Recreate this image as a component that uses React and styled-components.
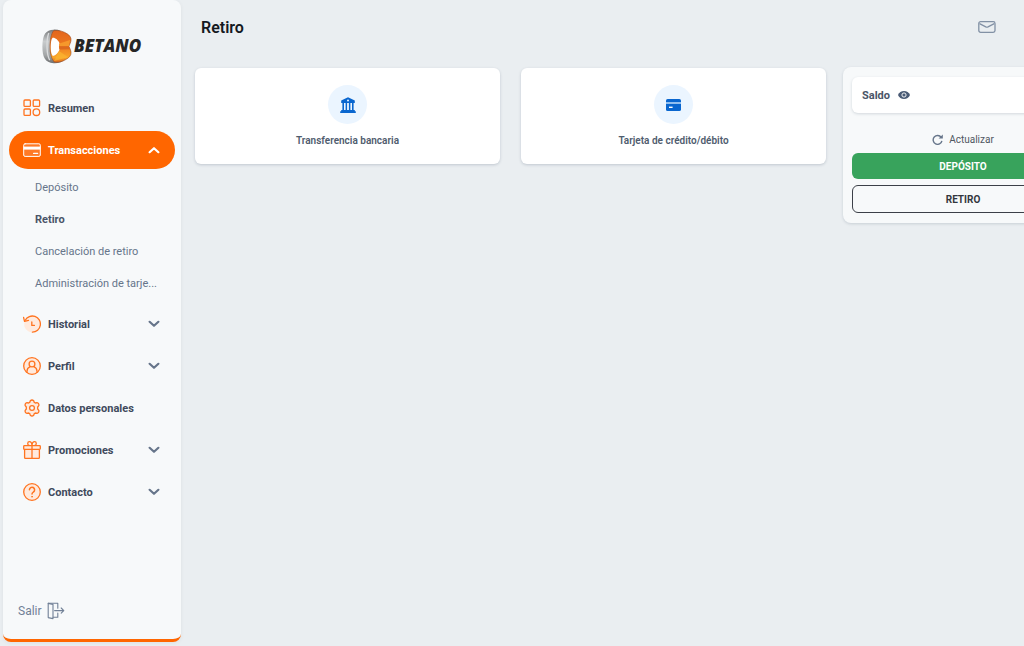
import React, { useState } from 'react';
import styled, { createGlobalStyle } from 'styled-components';

const GlobalStyle = createGlobalStyle`
  * {
    box-sizing: border-box;
  }

  body {
    margin: 0;
    background: #eaeef1;
    font-family: Roboto, "Liberation Sans", sans-serif;
    font-size: 11px;
    color: #4a5568;
  }

  button {
    font-family: inherit;
    cursor: pointer;
  }

  ul {
    list-style: none;
    margin: 0;
    padding: 0;
  }

  svg {
    display: block;
    flex-shrink: 0;
  }
`;

const Layout = styled.div`
  display: flex;
  min-height: 100vh;
  overflow: hidden;
`;

const Sidebar = styled.aside`
  display: flex;
  flex-direction: column;
  flex: 0 0 178px;
  min-width: 0;
  margin: 0 0 4px 3px;
  padding: 0 6px;
  background: #f7f9fa;
  border-bottom: 3px solid #ff6600;
  border-radius: 8px;
  box-shadow: 0 1px 4px rgba(0, 0, 0, 0.06);
`;

const Logo = styled.a`
  display: flex;
  align-items: center;
  gap: 2px;
  height: 89px;
  padding: 4px 0 0 33px;
  color: #262626;
  font-family: "Open Sans", sans-serif;
  font-size: 17px;
  font-style: italic;
  font-weight: 800;
  line-height: 20px;
  text-decoration: none;

  span {
    padding-bottom: 2px;
  }
`;

const Nav = styled.nav`
  flex: 1;

  > ul {
    display: flex;
    flex-direction: column;
    gap: 4px;
  }
`;

const NavButton = styled.button`
  display: flex;
  align-items: center;
  gap: 7px;
  width: 100%;
  height: 38px;
  padding: 0 15px 0 14px;
  border: 0;
  border-radius: 19px;
  background: ${props => (props.$active ? '#ff6600' : 'transparent')};
  color: ${props => (props.$active ? '#fff' : '#3f4a5c')};
  font-size: 11px;
  font-weight: 700;
  text-align: left;

  span {
    flex: 1;
    white-space: nowrap;
  }
`;

const SubList = styled.ul`
  padding: 3px 15px 1px 26px;
`;

const SubLink = styled.a`
  display: block;
  color: ${props => (props.$active ? '#4a5568' : '#66758a')};
  font-weight: ${props => (props.$active ? 700 : 400)};
  line-height: 32px;
  text-decoration: none;
  white-space: nowrap;
`;

const LogoutButton = styled.button`
  display: flex;
  align-items: center;
  align-self: flex-start;
  gap: 5px;
  height: 38px;
  margin-bottom: 9px;
  padding: 0 9px;
  border: 0;
  background: transparent;
  color: #718096;
  font-size: 12px;
`;

const Main = styled.main`
  flex: 1;
  min-width: 0;
  padding-left: 14px;
`;

const Header = styled.header`
  display: flex;
  align-items: center;
  justify-content: space-between;
  height: 67px;
  padding: 0 28px 13px 6px;
`;

const Title = styled.h1`
  margin: 0;
  color: #15191f;
  font-size: 16px;
  font-weight: 600;
`;

const IconButton = styled.button`
  padding: 0;
  border: 0;
  background: transparent;
  color: inherit;
`;

/* the balance panel keeps its width and runs off narrow windows */
const Content = styled.div`
  display: grid;
  grid-template-columns: 1fr 240px;
  align-items: start;
  gap: 17px;
  min-width: 888px;
`;

const Methods = styled.div`
  display: grid;
  grid-template-columns: 1fr 1fr;
  gap: 21px;
  padding-top: 1px;
`;

const MethodCard = styled.button`
  display: flex;
  flex-direction: column;
  align-items: center;
  gap: 10px;
  padding: 17px 17px 16px;
  border: 0;
  border-radius: 6px;
  background: #fff;
  box-shadow: 0 1px 3px rgba(45, 65, 90, 0.22);
  color: #4f5c6e;
  font-size: 10px;
  font-weight: 600;
  line-height: 14px;
`;

const MethodIcon = styled.div`
  display: flex;
  align-items: center;
  justify-content: center;
  width: 39px;
  height: 39px;
  border-radius: 50%;
  background: #ebf5ff;
`;

const Panel = styled.section`
  display: flex;
  flex-direction: column;
  padding: 10px 9px;
  border-radius: 8px;
  background: #f7f9fa;
  box-shadow: 0 1px 3px rgba(45, 65, 90, 0.18);
`;

const Balance = styled.div`
  display: flex;
  align-items: center;
  gap: 8px;
  height: 36px;
  padding: 0 10px;
  border-radius: 6px;
  background: #fff;
  box-shadow: 0 1px 3px rgba(45, 65, 90, 0.18);
  font-weight: 700;
`;

const RefreshButton = styled.button`
  display: flex;
  align-items: center;
  align-self: center;
  gap: 6px;
  height: 20px;
  margin: 16px 0 4px;
  padding: 0;
  border: 0;
  background: transparent;
  color: #4f5761;
  font-size: 10px;
`;

const ActionButton = styled.button`
  height: ${props => (props.$primary ? 26 : 28)}px;
  margin-bottom: ${props => (props.$primary ? 6 : 0)}px;
  padding: 0;
  border: ${props => (props.$primary ? '0' : '1px solid #3c4048')};
  border-radius: 6px;
  background: ${props => (props.$primary ? '#38a35c' : 'transparent')};
  color: ${props => (props.$primary ? '#fff' : '#33373d')};
  font-size: 10px;
  font-weight: 700;
`;

const LineIcon = ({ children, color = '#ff7420', size = 18 }) => (
  <svg width={size} height={size} viewBox="0 0 18 18" fill="none" stroke={color}
    strokeWidth="1.3" strokeLinecap="round" strokeLinejoin="round" aria-hidden="true">
    {children}
  </svg>
);

const icons = {
  resumen: (
    <LineIcon>
      <rect x="1" y="1" width="6.4" height="6.4" rx="1" />
      <rect x="10.2" y="1" width="6.4" height="6.4" rx="1" />
      <rect x="1" y="10" width="6.4" height="6.4" rx="1" />
      <circle cx="13.4" cy="13.2" r="3.3" />
    </LineIcon>
  ),
  transacciones: (
    <LineIcon color="#fff">
      <rect x="0.7" y="2.8" width="16.6" height="12.6" rx="1.4" fill="#ff7a26" strokeWidth="1" />
      <path d="M.6 5.6h16.8v3H.6z" fill="#fff" stroke="none" />
      <path d="M10.6 12.4h4" />
    </LineIcon>
  ),
  historial: (
    <LineIcon>
      <path d="M9 .9a8.1 8.1 0 1 1-7.7 10.4V6A8.1 8.1 0 0 1 9 .9z" fill="#ffeadd" stroke="none" />
      <path d="M2.2 5.2A8.1 8.1 0 1 1 9.4 17.2" />
      <path d="M.6 2.4l.9 4 4-1" />
      <path d="M8.8 7v3.4h2.6" />
    </LineIcon>
  ),
  perfil: (
    <LineIcon>
      <circle cx="9" cy="9" r="8.3" fill="#ffeadd" />
      <circle cx="9" cy="7" r="2.9" />
      <path d="M4 15.4v-1.2c0-2.2 1.3-3.8 3.2-4.6M14 15.4v-1.2c0-2.2-1.3-3.8-3.2-4.6" />
    </LineIcon>
  ),
  datos: (
    <LineIcon>
      <path d="M7.3 1.8Q9 .2 10.7 1.8l.6 1.6 1.1.6 1.7-.3q2.3.6 1.7 2.9l-1.1 1.4v2l1.1 1.4q.6 2.3-1.7 2.9l-1.7-.3-1.1.6-.6 1.6Q9 17.8 7.3 16.2l-.6-1.6-1.1-.6-1.7.3q-2.3-.6-1.7-2.9L3.3 10V8L2.2 6.6q-.6-2.3 1.7-2.9l1.7.3 1.1-.6z" fill="#ffeadd" />
      <circle cx="9" cy="9" r="2.4" fill="#f7f9fa" />
    </LineIcon>
  ),
  promociones: (
    <LineIcon>
      <rect x="1.6" y="8.2" width="14.8" height="9.2" rx="0.8" fill="#ffeadd" />
      <rect x="0.7" y="4.6" width="16.6" height="3.8" rx="0.8" fill="#ffeadd" />
      <path d="M9 4.6v12.8" />
      <path d="M9 4.4C8.8 2 7.8.7 6.4.7 4.2.7 4.2 4 6.2 4.4M9 4.4C9.2 2 10.2.7 11.6.7c2.2 0 2.2 3.3.2 3.7" />
    </LineIcon>
  ),
  contacto: (
    <LineIcon>
      <circle cx="9" cy="9" r="8.3" fill="#ffeadd" />
      <path d="M6.4 6.8a2.6 2.6 0 1 1 4 2.2c-1 .7-1.4 1.1-1.4 2.1" strokeWidth="1.5" />
      <circle cx="9" cy="13.7" r="0.5" fill="#ff7420" strokeWidth="0.7" />
    </LineIcon>
  ),
};

const Chevron = ({ up }) => (
  <svg width="12" height="8" viewBox="0 0 12 8" fill="none" stroke={up ? '#fff' : '#66758a'}
    strokeWidth="2.2" strokeLinecap="round" strokeLinejoin="round" aria-hidden="true">
    <path d={up ? 'M1.6 6.2L6 2.2l4.4 4' : 'M1.6 1.8L6 5.8l4.4-4'} />
  </svg>
);

const LogoMark = () => (
  <svg width="30" height="35" viewBox="0 0 31 36" aria-hidden="true">
    <defs>
      <linearGradient id="metal" x1="0" y1="0" x2="0" y2="1">
        <stop offset="0" stopColor="#77797a" />
        <stop offset="0.35" stopColor="#c9cccd" />
        <stop offset="0.75" stopColor="#a5a8a9" />
        <stop offset="1" stopColor="#6e7071" />
      </linearGradient>
      <linearGradient id="flame" x1="0" y1="0" x2="0" y2="1">
        <stop offset="0" stopColor="#e3651c" />
        <stop offset="0.5" stopColor="#ee7a20" />
        <stop offset="0.85" stopColor="#f9a629" />
        <stop offset="1" stopColor="#df6a1b" />
      </linearGradient>
    </defs>
    <path d="M12 .6C4 1 .6 5 .4 18c0 11 2.6 16.5 11.6 17.2 5 .3 9-1.2 12-4L17 4.5 19.5 2C17 .8 14.5.4 12 .6z" fill="url(#metal)" />
    <path d="M7 4C5.5 8 5 13 5.2 19c.2 6 1 10 2.8 13" fill="none" stroke="#d9dbdc" strokeWidth="1.4" />
    <path d="M12 1.6c5-.8 10 .5 14.5 3.6 3.5 2.5 4.3 5.5 2.7 9.3l-1.4 3.3 1.6 3.6c1.3 3.5.6 6-2 8.2C22.8 33 18 35 12.5 34 9.5 30 8.2 25 8.2 18S9.4 5 12 1.6z" fill="url(#flame)" stroke="#9b481c" strokeWidth="0.6" />
    <path d="M9.300 23c-.6-6-.1-12 1.600-14 2.900-.3 5.800 2.400 7.200 5.600l-.5 3.200.6 3.400c-1.200 3.400-3.900 6.200-7 6.600-1-1-1.600-2.600-1.900-4.800z" fill="#fff" />
    <path d="M18 15l11-3.600-1.200 6.400H17.500z" fill="#f6982b" />
    <path d="M17.500 17.800h10.300l1 3-10.800.2z" fill="#dd6a1e" />
    <path d="M12.500 33l5-10.300L27 29z" fill="#fbb531" opacity="0.7" />
  </svg>
);

const menu = [
  { label: 'Resumen', icon: 'resumen' },
  {
    label: 'Transacciones',
    icon: 'transacciones',
    children: ['Depósito', 'Retiro', 'Cancelación de retiro', 'Administración de tarje...'],
  },
  { label: 'Historial', icon: 'historial', expandable: true },
  { label: 'Perfil', icon: 'perfil', expandable: true },
  { label: 'Datos personales', icon: 'datos' },
  { label: 'Promociones', icon: 'promociones', expandable: true },
  { label: 'Contacto', icon: 'contacto', expandable: true },
];

const BankIcon = () => (
  <svg width="16" height="16" viewBox="0 0 16 16" fill="#0966cf" aria-hidden="true">
    <path fillRule="evenodd" d="M8 .2l6.8 3.2V6H1.2V3.4zM8 2.6a1 1 0 1 0 0 2 1 1 0 0 0 0-2z" />
    <path d="M2.4 6H4v7.2H2.4zM5.6 6h1.5v7.2H5.6zM8.9 6h1.5v7.2H8.9zM12 6h1.6v7.2H12z" />
    <path d="M1.2 13h13.6v1.2h1V16H.2v-1.8h1z" />
  </svg>
);

const CardIcon = () => (
  <svg width="15" height="12" viewBox="0 0 15 12" aria-hidden="true">
    <rect width="15" height="12" rx="1.6" fill="#0966cf" />
    <path d="M0 3.2h15v1.6H0z" fill="#b5d6f7" />
    <path d="M3 7.6h3.6v1.4H3z" fill="#fff" />
  </svg>
);

function App() {
  const [open, setOpen] = useState(true);

  return (
    <Layout>
      <GlobalStyle />

      <Sidebar>
        <Logo href="#"><LogoMark /><span>BETANO</span></Logo>
        <Nav>
          <ul>
            {menu.map(item => (
              <li key={item.label}>
                <NavButton
                  $active={!!item.children}
                  onClick={item.children ? () => setOpen(!open) : undefined}
                >
                  {icons[item.icon]}
                  <span>{item.label}</span>
                  {(item.children || item.expandable) && <Chevron up={item.children && open} />}
                </NavButton>
                {item.children && open && (
                  <SubList>
                    {item.children.map(child => (
                      <li key={child}>
                        <SubLink href="#" $active={child === 'Retiro'}>{child}</SubLink>
                      </li>
                    ))}
                  </SubList>
                )}
              </li>
            ))}
          </ul>
        </Nav>
        <LogoutButton>
          Salir
          <svg width="18" height="18" viewBox="0 0 18 18" fill="none" stroke="#718096"
            strokeWidth="1.1" strokeLinecap="round" strokeLinejoin="round" aria-hidden="true">
            <path d="M1.2 1.4L6 2.4v14.2l-4.8-1z" />
            <path d="M1.2 1.2h9.6v5M10.8 11v4.2H6.2M7.6 8.6h9M14.2 6l2.6 2.6-2.6 2.6" />
          </svg>
        </LogoutButton>
      </Sidebar>

      <Main>
        <Header>
          <Title>Retiro</Title>
          <IconButton aria-label="Mensajes">
            <svg width="18" height="12" viewBox="0 0 18 12" fill="none" stroke="#8291a5"
              strokeWidth="1.3" strokeLinecap="round" strokeLinejoin="round">
              <rect x="0.8" y="0.7" width="16.2" height="10.6" rx="1.8" />
              <path d="M2 2.8l5.8 3q1.1.5 2.2 0l5.8-3" />
            </svg>
          </IconButton>
        </Header>

        <Content>
          <Methods>
            <MethodCard>
              <MethodIcon><BankIcon /></MethodIcon>
              Transferencia bancaria
            </MethodCard>
            <MethodCard>
              <MethodIcon><CardIcon /></MethodIcon>
              Tarjeta de crédito/débito
            </MethodCard>
          </Methods>

          <Panel>
            <Balance>
              Saldo
              <IconButton aria-label="Mostrar saldo">
                <svg width="12" height="8" viewBox="0 0 12 8">
                  <path d="M6 0c2.7 0 4.9 1.5 6 4-1.1 2.5-3.3 4-6 4S1.1 6.5 0 4c1.1-2.5 3.3-4 6-4z" fill="#4a5b75" />
                  <circle cx="6" cy="4" r="2.1" fill="none" stroke="#fff" strokeWidth="0.9" />
                </svg>
              </IconButton>
            </Balance>
            <RefreshButton>
              <svg width="11" height="11" viewBox="0 0 11 11" fill="none" stroke="#66758a" strokeWidth="1.4" aria-hidden="true">
                <path d="M9.2 3.4A4.4 4.4 0 1 0 9.9 6.8" />
                <path d="M10.8.4v4.2H6.6z" fill="#66758a" stroke="none" />
              </svg>
              Actualizar
            </RefreshButton>
            <ActionButton $primary>DEPÓSITO</ActionButton>
            <ActionButton>RETIRO</ActionButton>
          </Panel>
        </Content>
      </Main>
    </Layout>
  );
}

export default App;
